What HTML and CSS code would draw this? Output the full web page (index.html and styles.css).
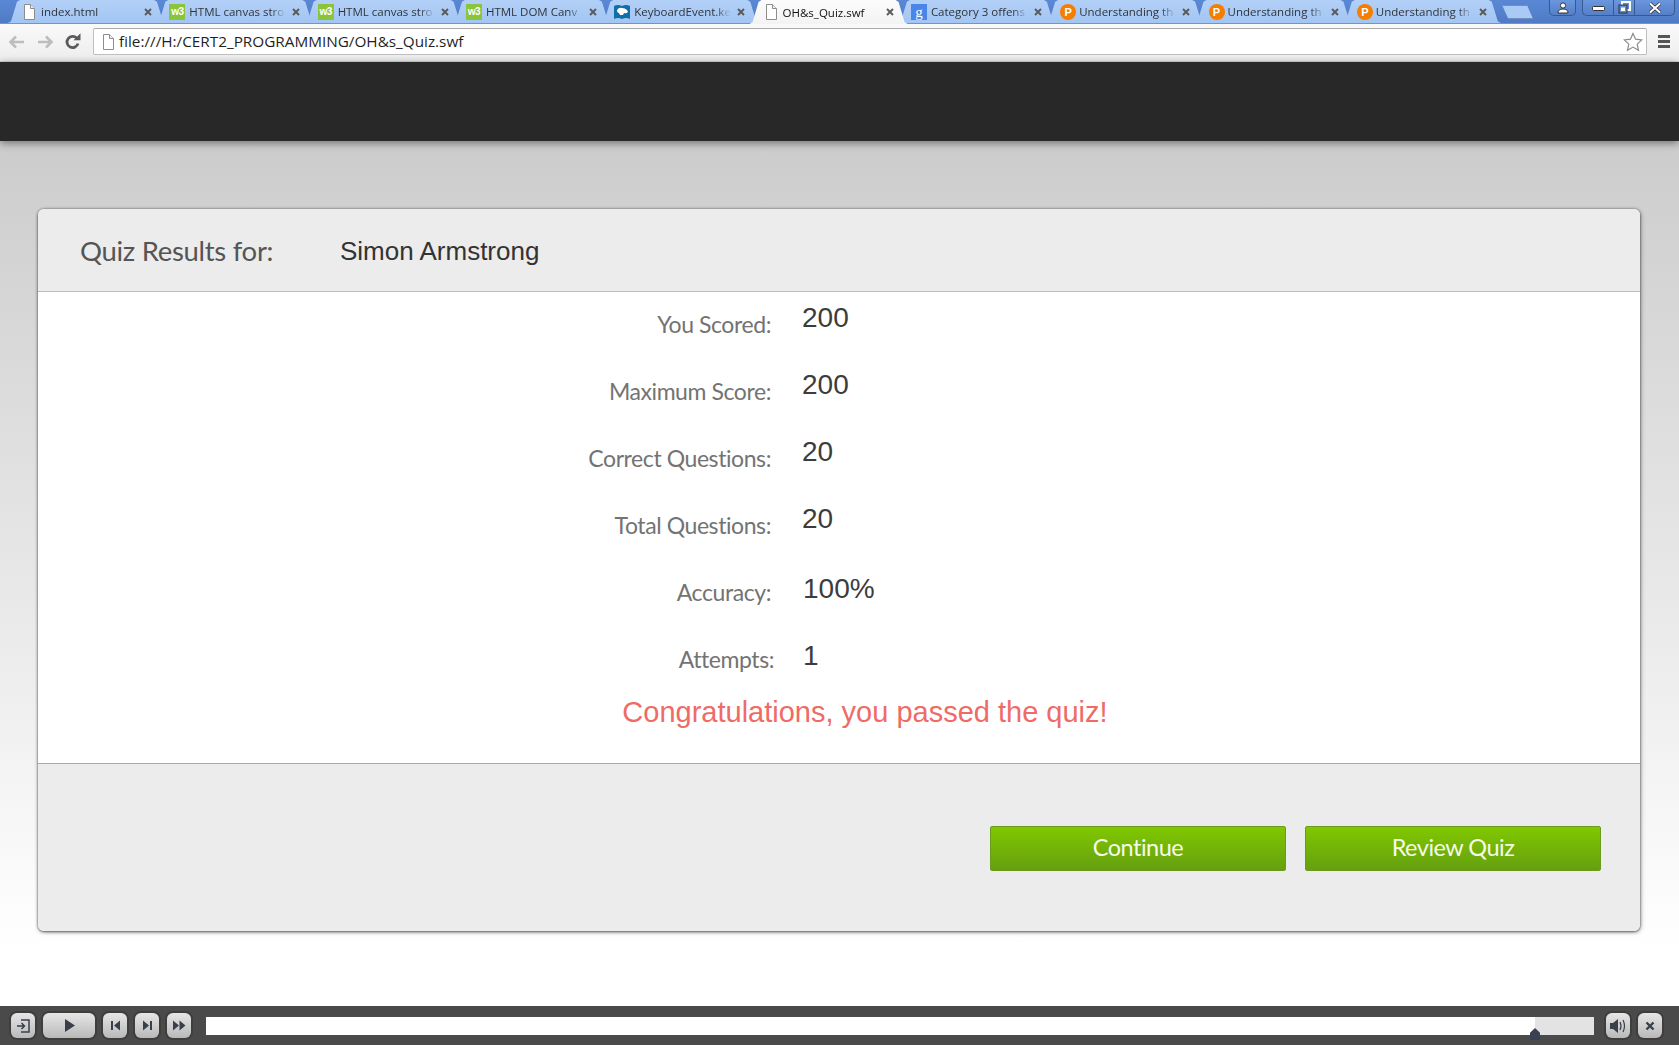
FILE: index.html
```html
<!DOCTYPE html>
<html lang="en">
<head>
<meta charset="utf-8">
<title>OH&amp;s_Quiz.swf</title>
<link rel="stylesheet" href="styles.css">
</head>
<body>
<svg class="defs" width="0" height="0" aria-hidden="true">
  <defs>
    <symbol id="doc" viewBox="0 0 14 16"><path d="M2.5 .5h6l4 4v11h-10z" fill="#fff" stroke="#8d8d8d"/><path d="M8.5 .5v4h4" fill="#eee" stroke="#8d8d8d"/></symbol>
    <symbol id="close" viewBox="0 0 10 10"><path d="M2 2l6 6M8 2l-6 6" stroke="#5a5a5a" stroke-width="1.9" fill="none"/></symbol>
  </defs>
</svg>
<header class="chrome">
  <div class="tabstrip">
    <div class="tab"><svg class="fav"><use href="#doc"/></svg><span class="tab-title">index.html</span><svg class="tab-x"><use href="#close"/></svg></div>
    <div class="tab"><span class="fav w3">w3</span><span class="tab-title">HTML canvas stro</span><svg class="tab-x"><use href="#close"/></svg></div>
    <div class="tab"><span class="fav w3">w3</span><span class="tab-title">HTML canvas stro</span><svg class="tab-x"><use href="#close"/></svg></div>
    <div class="tab"><span class="fav w3">w3</span><span class="tab-title">HTML DOM Canv</span><svg class="tab-x"><use href="#close"/></svg></div>
    <div class="tab"><svg class="fav" viewBox="0 0 16 16"><path d="M0 2q4-2 8 0q4-2 8 0v13q-4-2-8 0q-4-2-8 0z" fill="#0f6fa8"/><path d="M3 6q2-3 5-2q3 0 5 2l1 2q-2 2-4 1l-1 2h-3l-1-2q-2 0-2-3z" fill="#fff"/></svg><span class="tab-title">KeyboardEvent.ke</span><svg class="tab-x"><use href="#close"/></svg></div>
    <div class="tab tab-active"><svg class="fav"><use href="#doc"/></svg><span class="tab-title">OH&amp;s_Quiz.swf</span><svg class="tab-x"><use href="#close"/></svg></div>
    <div class="tab"><span class="fav goog">g</span><span class="tab-title">Category 3 offens</span><svg class="tab-x"><use href="#close"/></svg></div>
    <div class="tab"><span class="fav pea">P</span><span class="tab-title">Understanding th</span><svg class="tab-x"><use href="#close"/></svg></div>
    <div class="tab"><span class="fav pea">P</span><span class="tab-title">Understanding th</span><svg class="tab-x"><use href="#close"/></svg></div>
    <div class="tab"><span class="fav pea">P</span><span class="tab-title">Understanding th</span><svg class="tab-x"><use href="#close"/></svg></div>
    <div class="newtab"></div>
    <div class="winbtns">
      <div class="winbtn win-user"><svg width="12" height="12" viewBox="0 0 12 12"><circle cx="6" cy="3.5" r="2.6" fill="#fff" stroke="#333"/><path d="M1 11q0-4 5-4t5 4z" fill="#fff" stroke="#333"/></svg></div>
      <div class="winctl">
        <div class="winbtn win-min"><svg width="13" height="8" viewBox="0 0 13 8"><rect x=".5" y="2.5" width="12" height="4" rx="1" fill="#fff" stroke="#333"/></svg></div>
        <div class="winbtn win-max"><svg width="13" height="13" viewBox="0 0 13 13"><rect x="4" y="1" width="8" height="8" fill="none" stroke="#fff" stroke-width="2"/><rect x="1" y="4" width="8" height="8" fill="#5f8dd6" stroke="#333"/><rect x="3" y="6.5" width="4" height="3.5" fill="#fff"/></svg></div>
        <div class="winbtn win-cls"><svg width="14" height="12" viewBox="0 0 14 12"><path d="M2 1.5l10 9M12 1.5l-10 9" stroke="#333" stroke-width="3.6"/><path d="M2 1.5l10 9M12 1.5l-10 9" stroke="#fff" stroke-width="2"/></svg></div>
      </div>
    </div>
  </div>
  <div class="toolbar">
    <svg class="navicon" viewBox="0 0 18 16"><path d="M2 8h14M8 2.5L2.5 8 8 13.5" fill="none" stroke="#bdbdbd" stroke-width="2.6"/></svg>
    <svg class="navicon" viewBox="0 0 18 16"><path d="M2 8h14M10 2.5L15.5 8 10 13.5" fill="none" stroke="#bdbdbd" stroke-width="2.6"/></svg>
    <svg class="navicon reload" viewBox="0 0 18 18"><path d="M14 10.5a5.6 5.6 0 1 1-1.2-5.2" fill="none" stroke="#5a5a5a" stroke-width="2.8"/><path d="M9.500 7.200h7v-7z" fill="#5a5a5a"/></svg>
    <div class="omnibox">
      <svg class="omni-doc"><use href="#doc"/></svg>
      <span class="url">file:///H:/CERT2_PROGRAMMING/OH&amp;s_Quiz.swf</span>
      <svg class="star" viewBox="0 0 20 20"><path d="M10 1.500l2.600 5.700 6.200.7-4.600 4.200 1.300 6.100-5.500-3.100-5.500 3.100 1.300-6.100L1.200 7.900l6.200-.7z" fill="#fff" stroke="#8b8b8b" stroke-width="1.200"/></svg>
    </div>
    <div class="menu"><i></i><i></i><i></i></div>
  </div>
</header>

<div class="darkband"></div>

<main class="stage">
  <section class="card">
    <div class="card-head">
      <h1 class="head-label">Quiz Results for:</h1>
      <span class="head-name">Simon Armstrong</span>
    </div>
    <div class="card-body">
      <div class="row"><span class="label">You Scored:</span><span class="value">200</span></div>
      <div class="row"><span class="label">Maximum Score:</span><span class="value">200</span></div>
      <div class="row"><span class="label">Correct Questions:</span><span class="value">20</span></div>
      <div class="row"><span class="label">Total Questions:</span><span class="value">20</span></div>
      <div class="row row-acc"><span class="label">Accuracy:</span><span class="value">100%</span></div>
      <div class="row row-last"><span class="label">Attempts:</span><span class="value">1</span></div>
      <p class="congrats">Congratulations, you passed the quiz!</p>
    </div>
    <div class="card-foot">
      <button class="btn">Continue</button>
      <button class="btn">Review Quiz</button>
    </div>
  </section>
</main>

<footer class="player">
  <div class="pbtn"><svg width="15" height="14" viewBox="0 0 15 14"><path d="M5 1h8v12H5M1 7h7M5.500 4L8.500 7 5.500 10" fill="none" stroke="#3a3f4c" stroke-width="1.500"/></svg></div>
  <div class="pbtn pbtn-play"><svg width="11" height="13" viewBox="0 0 11 13"><path d="M1 0l10 6.500L1 13z" fill="#3a3f4c"/></svg></div>
  <div class="pbtn"><svg width="11" height="11" viewBox="0 0 11 11"><path d="M1 1h2v9H1zM10 .5v10L4 5.500z" fill="#3a3f4c"/></svg></div>
  <div class="pbtn"><svg width="11" height="11" viewBox="0 0 11 11"><path d="M8 1h2v9H8zM1 .5v10l6-5z" fill="#3a3f4c"/></svg></div>
  <div class="pbtn"><svg width="14" height="11" viewBox="0 0 14 11"><path d="M1 .5v10l6-5zM7.500 .5v10l6-5z" fill="#3a3f4c"/></svg></div>
  <div class="track"><div class="played"></div><div class="thumb"></div></div>
  <div class="pbtn"><svg width="18" height="16" viewBox="0 0 18 16"><path d="M1 5h3l5-4v14l-5-4H1z" fill="#3a3f4c"/><path d="M11 4q2 4 0 8M14 2q3 6 0 12" fill="none" stroke="#3a3f4c" stroke-width="1.200"/></svg></div>
  <div class="pbtn"><svg width="10" height="10" viewBox="0 0 10 10"><path d="M1.500 1.500l7 7M8.500 1.500l-7 7" stroke="#3a3f4c" stroke-width="2.400"/></svg></div>
</footer>
</body>
</html>
```

FILE: styles.css
```css
* { box-sizing: border-box; }
html, body { margin: 0; padding: 0; }
body {
  width: 1679px;
  height: 1049px;
  overflow: hidden;
  background: #fff;
  display: flex;
  flex-direction: column;
  font-family: "Liberation Sans", Arial, sans-serif;
}
.defs { position: absolute; }

/* browser chrome */
.chrome { flex: none; height: 62px; background: #f1f1f1; }
.tabstrip {
  height: 24px;
  padding-left: 8px;
  display: flex;
  background: linear-gradient(#5b88d4, #4f7bc6);
  border-bottom: 1px solid #7d93b5;
}
.tab {
  position: relative;
  flex: none;
  width: 158px;
  height: 23px;
  margin-right: -9.7px;
  padding-left: 13px;
  display: flex;
  align-items: center;
  background: linear-gradient(#b2d0f7, #a3c5f3);
  clip-path: polygon(0 100%, 3px 92%, 9px 8%, 12px 0, calc(100% - 12px) 0, calc(100% - 9px) 8%, calc(100% - 3px) 92%, 100% 100%);
  font-family: "Open Sans", "Liberation Sans", sans-serif;
  font-size: 11.5px;
  color: #30343a;
}
.tab-active {
  z-index: 2;
  height: 24px;
  background: linear-gradient(#fcfcfc, #f3f3f3);
  color: #111;
}
.fav {
  flex: none;
  width: 16px;
  height: 16px;
  margin-right: 4px;
  font-style: normal;
  display: flex;
  align-items: center;
  justify-content: center;
}
.w3 {
  background: #8ac43b;
  color: #fff;
  font: bold 10px/16px "Liberation Sans", sans-serif;
  letter-spacing: -.5px;
}
.goog {
  background: #4a86e8;
  color: #fff;
  font: 15px/16px "Liberation Serif", serif;
}
.pea {
  margin-left: 1px;
  margin-right: 3px;
  border-radius: 50%;
  background: #f57d00;
  color: #fff;
  font: bold 11px/16px "Liberation Sans", sans-serif;
}
.tab-title {
  flex: none;
  width: 97px;
  white-space: nowrap;
  overflow: hidden;
  -webkit-mask-image: linear-gradient(to right, #000 84%, transparent 100%);
  mask-image: linear-gradient(to right, #000 84%, transparent 100%);
}
.tab-x { flex: none; width: 10px; height: 10px; margin-left: 5px; }
.newtab {
  flex: none;
  width: 31px;
  height: 14px;
  margin: 5px 0 0 11px;
  background: #a9caf5;
  border: 1px solid #6f8fc0;
  clip-path: polygon(0 0, 80% 0, 100% 100%, 20% 100%);
}
.winbtns {
  margin-left: auto;
  margin-right: 4px;
  display: flex;
  gap: 6px;
}
.winctl { display: flex; }
.winbtn {
  height: 16px;
  display: flex;
  align-items: center;
  justify-content: center;
  border: 1px solid #38598f;
  border-top: 0;
  border-radius: 0 0 5px 5px;
  background: linear-gradient(#6a97de, #557fc8);
}
.win-user { width: 27px; }
.win-min { width: 31px; border-right: 0; border-radius: 0 0 0 5px; }
.win-max { width: 21px; border-right: 0; border-radius: 0; }
.win-cls { width: 41px; border-radius: 0 0 5px 0; }

.toolbar {
  height: 38px;
  padding: 4px 9px 6px 8px;
  display: flex;
  align-items: center;
  background: linear-gradient(#f9f9f9, #ededed);
  border-bottom: 1px solid #d5d5d5;
}
.navicon { flex: none; width: 18px; height: 16px; margin-right: 10px; }
.reload { width: 18px; height: 18px; margin-right: 11px; }
.omnibox {
  flex: 1;
  height: 27px;
  display: flex;
  align-items: center;
  padding: 0 3px 0 7px;
  background: #fff;
  border: 1px solid #bfbfbf;
  border-top-color: #a9a9a9;
  border-radius: 2px;
}
.omni-doc { flex: none; width: 14px; height: 16px; margin-right: 4px; }
.url {
  margin-top: -2px;
  font-family: "Open Sans", "Liberation Sans", sans-serif;
  font-size: 15.300px;
  color: #1f1f1f;
}
.star { width: 20px; height: 20px; margin-left: auto; }
.menu {
  flex: none;
  width: 12px;
  margin-left: 11px;
  display: flex;
  flex-direction: column;
  gap: 2px;
}
.menu i { display: block; height: 3px; background: #555; }

/* page */
.darkband {
  position: relative;
  z-index: 3;
  flex: none;
  height: 79px;
  background: #282828;
  box-shadow: 0 2px 8px rgba(0,0,0,.45);
}
.stage {
  flex: none;
  height: 865px;
  padding: 68px 39px 0 38px;
  background: linear-gradient(#cccccc 0, #ffffff 94%);
}
.card {
  height: 722px;
  display: flex;
  flex-direction: column;
  border-radius: 6px;
  overflow: hidden;
  background: #fff;
  box-shadow: 0 1px 3px rgba(0,0,0,.5), 0 0 2px rgba(0,0,0,.35), 1px 1px 5px rgba(0,0,0,.25);
}
.card-head {
  flex: none;
  height: 83px;
  padding: 0 0 0 42px;
  display: flex;
  align-items: center;
  background: #ececec;
  border-bottom: 1px solid #bcbcbc;
}
.head-label {
  width: 260px;
  margin: 0;
  font-family: Lato, sans-serif;
  font-weight: 400;
  font-size: 27.500px;
  letter-spacing: -.3px;
  color: #555;
}
.head-name { margin-top: 2px; font-size: 26px; color: #333; }
.card-body { flex: 1; position: relative; }
.row {
  height: 67px;
  display: flex;
  align-items: flex-start;
}
.label {
  width: 733px;
  padding-top: 18px;
  text-align: right;
  font-family: Lato, sans-serif;
  font-size: 23px;
  letter-spacing: -.42px;
  color: #737373;
}
.value {
  margin-left: 31px;
  padding-top: 10px;
  font-size: 28px;
  color: #3c3c3c;
}
.row-acc .value { padding-top: 13px; margin-left: 32px; }
.row-last { height: 49px; }
.row-last .label { width: 736px; }
.row-last .value { margin-left: 29px; padding-top: 13px; }
.congrats {
  margin: 19px 0 0;
  padding-left: 52px;
  text-align: center;
  font-size: 29px;
  line-height: 34px;
  color: #ef6b66;
  white-space: nowrap;
}
.card-foot {
  flex: none;
  height: 168px;
  padding: 62px 39px 0 0;
  display: flex;
  justify-content: flex-end;
  align-items: flex-start;
  gap: 19px;
  background: #ececec;
  border-top: 1px solid #a8a8a8;
}
.btn {
  width: 296px;
  height: 45px;
  padding: 0 0 3px;
  border: 1px solid #6c9a1e;
  border-radius: 2px;
  background: linear-gradient(#80c800, #669f10);
  font-family: Lato, sans-serif;
  font-size: 23.500px;
  letter-spacing: -.5px;
  color: #f4fbe8;
}

/* player */
.player {
  flex: none;
  height: 39px;
  padding: 7px 17px 0 11px;
  display: flex;
  align-items: flex-start;
  background: #4a4a4a;
}
.pbtn {
  flex: none;
  width: 24px;
  height: 25px;
  margin-right: 8px;
  display: flex;
  align-items: center;
  justify-content: center;
  border-radius: 6px;
  background: linear-gradient(#e6e6e6, #b9b9b9);
  box-shadow: 0 0 0 2px #3e3e3e;
}
.pbtn-play { width: 52px; }
.track {
  position: relative;
  flex: none;
  width: 1388px;
  height: 18px;
  margin: 4px 12px 0 7px;
  background: #e3e3e3;
}
.played { width: 1329px; height: 100%; background: #fff; }
.thumb {
  position: absolute;
  left: 1324px;
  top: 11px;
  width: 10px;
  height: 12px;
  background: #3b3f52;
  clip-path: polygon(50% 0, 100% 40%, 100% 100%, 0 100%, 0 40%);
}
```
